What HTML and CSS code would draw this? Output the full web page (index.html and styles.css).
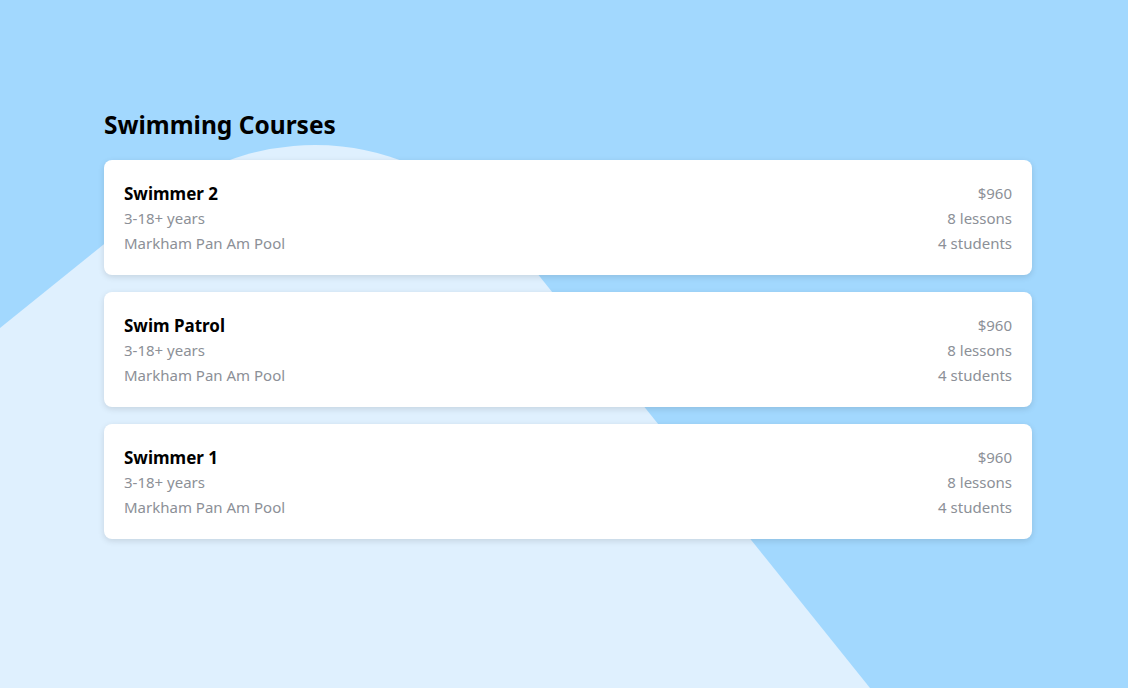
FILE: index.html
```html
<!DOCTYPE html>
<html lang="en">
<head>
  <meta charset="UTF-8">
  <meta name="viewport" content="width=device-width, initial-scale=1.0">
  <title>Swimming Courses</title>
  <link rel="stylesheet" href="styles.css">
</head>
<body>
  <!-- background hill -->
  <svg class="backdrop" width="1128" height="688" viewBox="0 0 1128 688" aria-hidden="true">
    <path d="M0 328 L160 199 A249 249 0 0 1 508 237 L870 688 L0 688 Z" fill="#dff0fe"/>
  </svg>

  <main class="courses">
    <h1>Swimming Courses</h1>

    <div class="course-list">
      <div class="course-card">
        <div class="course-main">
          <p class="course-name">Swimmer 2</p>
          <p>3-18+ years</p>
          <p>Markham Pan Am Pool</p>
        </div>
        <div class="course-meta">
          <p>$960</p>
          <p>8 lessons</p>
          <p>4 students</p>
        </div>
      </div>

      <div class="course-card">
        <div class="course-main">
          <p class="course-name">Swim Patrol</p>
          <p>3-18+ years</p>
          <p>Markham Pan Am Pool</p>
        </div>
        <div class="course-meta">
          <p>$960</p>
          <p>8 lessons</p>
          <p>4 students</p>
        </div>
      </div>

      <div class="course-card">
        <div class="course-main">
          <p class="course-name">Swimmer 1</p>
          <p>3-18+ years</p>
          <p>Markham Pan Am Pool</p>
        </div>
        <div class="course-meta">
          <p>$960</p>
          <p>8 lessons</p>
          <p>4 students</p>
        </div>
      </div>
    </div>
  </main>
</body>
</html>
```

FILE: styles.css
```css
/* General Styling */
body {
  font-family: 'Noto Sans', 'Open Sans', sans-serif;
  background: #a2d8fe;
  margin: 0;
  height: 100vh;
  overflow: hidden;
  color: #000;
}

.backdrop {
  position: absolute;
  top: 0;
  left: 0;
  z-index: 0;
}

.courses {
  position: relative;
  z-index: 1;
  width: 928px;
  margin-left: 104px;
  padding-top: 109px;
}

h1 {
  margin: 0 0 20px;
  font-size: 24.5px;
  line-height: 31px;
  font-weight: 700;
}

.course-list {
  display: flex;
  flex-direction: column;
  gap: 17px;
}

.course-card {
  display: flex;
  justify-content: space-between;
  background: #fff;
  border-radius: 8px;
  padding: 21px 20px 19px;
  box-shadow: 0 2px 6px rgba(0, 0, 0, 0.12);
}

.course-card p {
  margin: 0;
  font-size: 15px;
  line-height: 25px;
  color: #8c9097;
}

.course-card .course-name {
  font-size: 17px;
  font-weight: 700;
  color: #000;
}

.course-meta {
  text-align: right;
}
```
